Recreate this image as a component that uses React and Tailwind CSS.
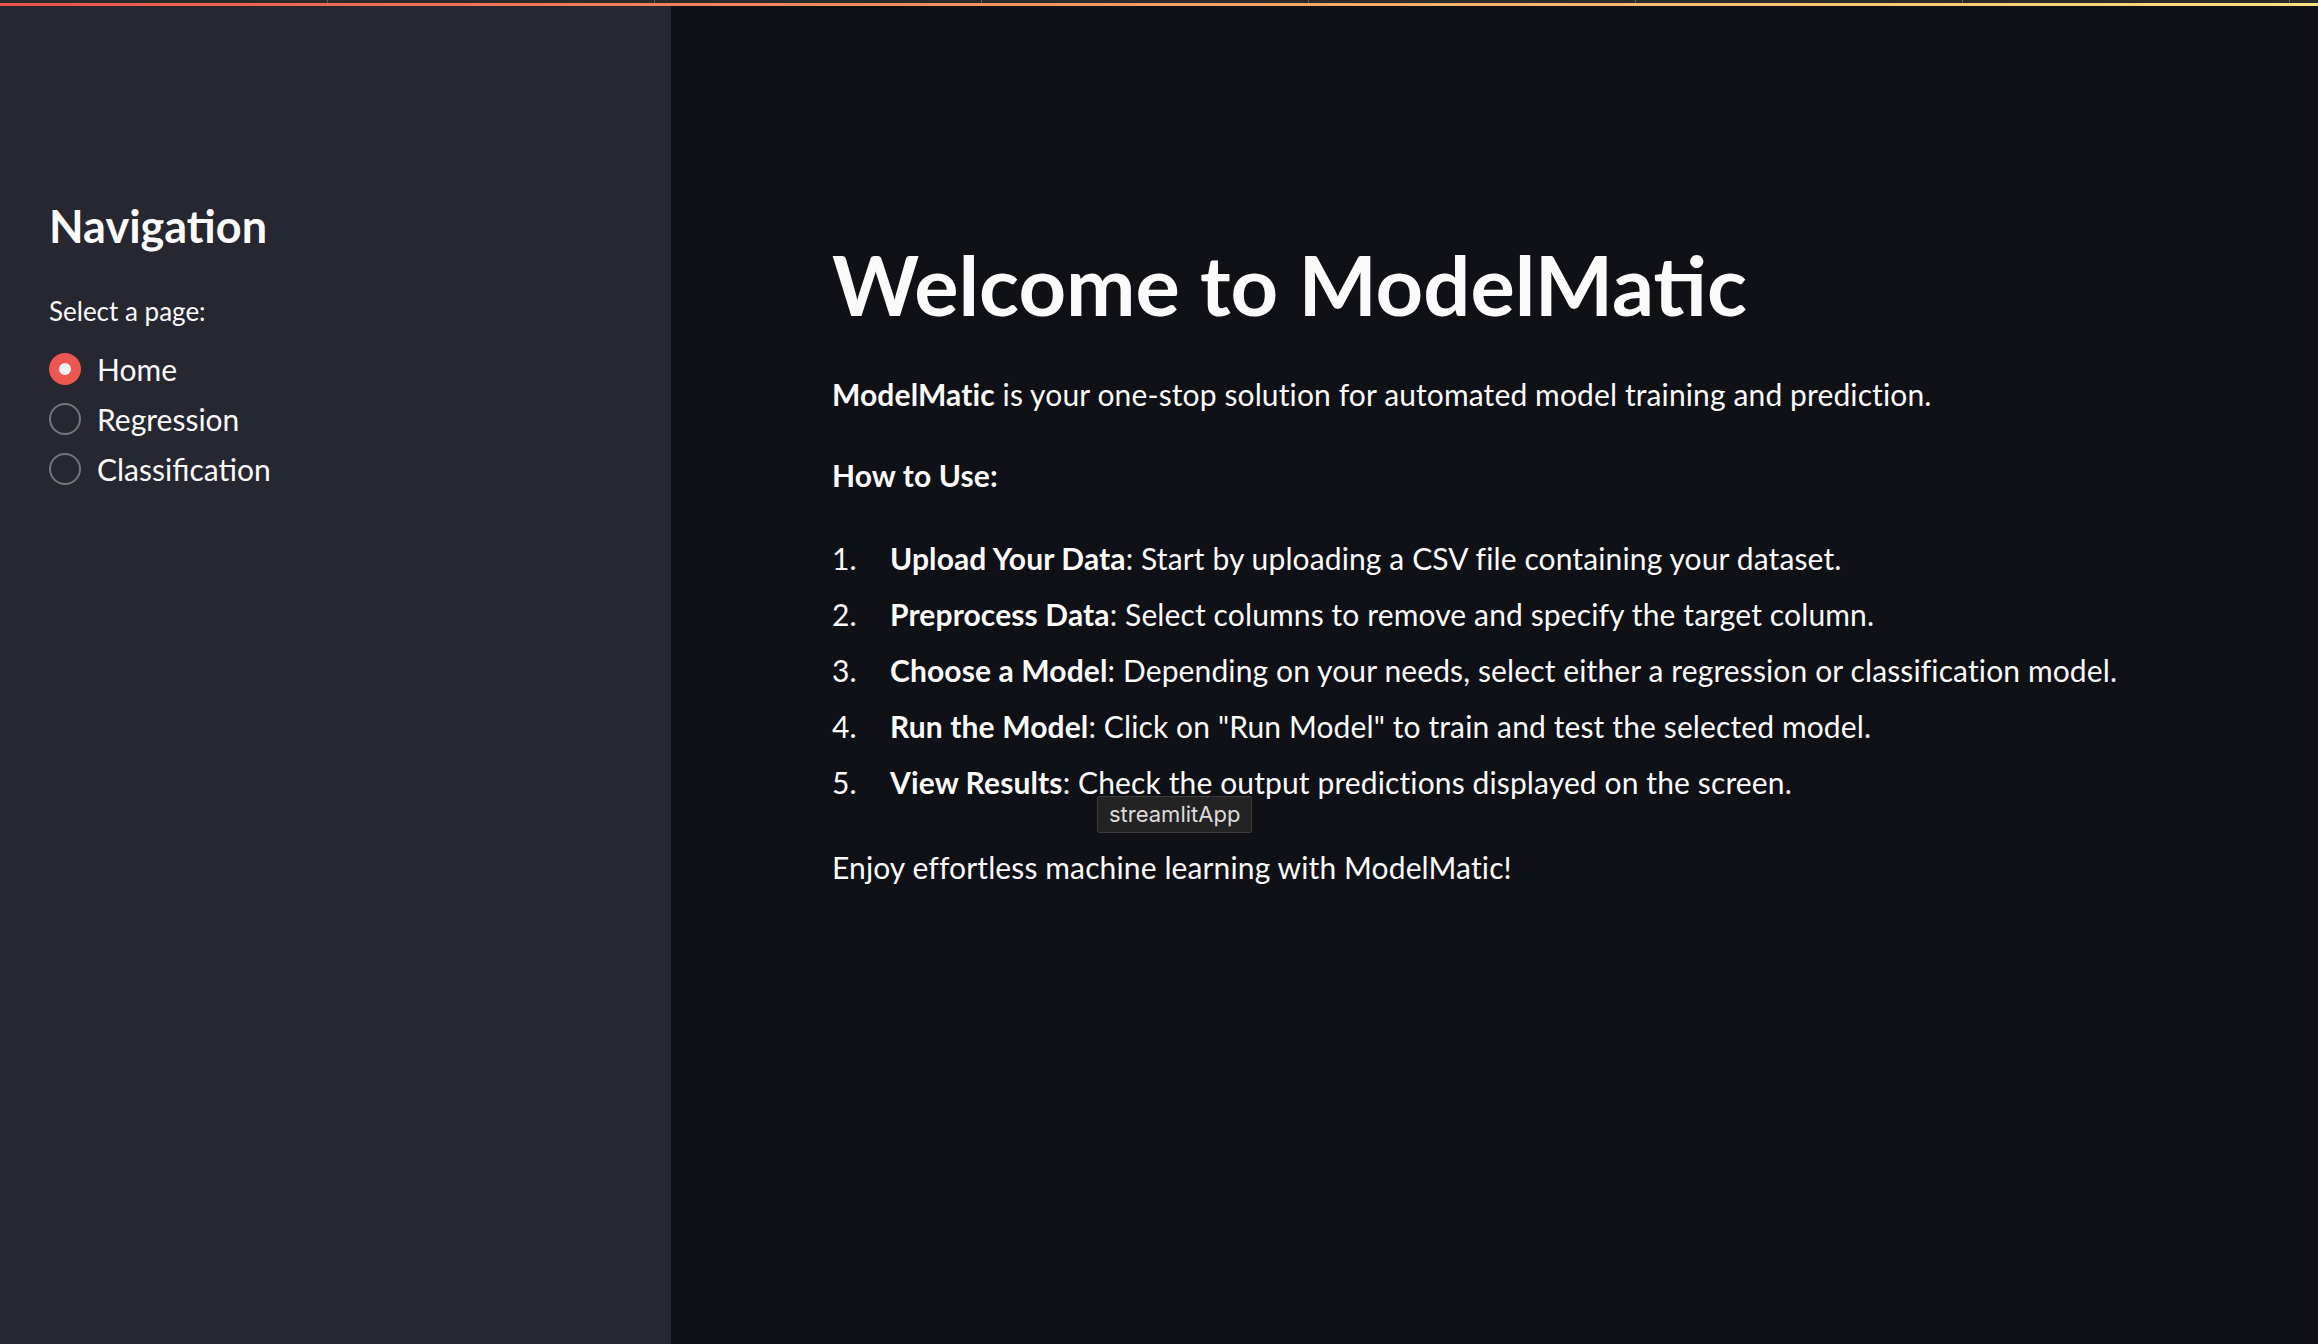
import React from "react";

const steps = [
  { title: "Upload Your Data", text: ": Start by uploading a CSV file containing your dataset." },
  { title: "Preprocess Data", text: ": Select columns to remove and specify the target column." },
  { title: "Choose a Model", text: ": Depending on your needs, select either a regression or classification model." },
  { title: "Run the Model", text: ': Click on "Run Model" to train and test the selected model.' },
  { title: "View Results", text: ": Check the output predictions displayed on the screen." },
];

const pages = ["Home", "Regression", "Classification"];

const Radio = ({ label, checked }) => (
  <div className="flex items-center h-[50px]">
    {checked ? (
      <span className="w-8 h-8 rounded-full bg-[#ec5750] flex items-center justify-center">
        <span className="w-3 h-3 rounded-full bg-[#eef0f4]" />
      </span>
    ) : (
      <span className="w-8 h-8 rounded-full border-2 border-[#75767c] bg-[#262730]" />
    )}
    <span className="ml-4 text-[30px] text-[#fafafa]">{label}</span>
  </div>
);

const App = () => {
  return (
    <div className="h-screen w-full flex flex-col bg-[#0f1116] overflow-hidden" style={{ fontFamily: "Lato, 'Noto Sans', sans-serif" }}>
      {/* top strip */}
      <div className="h-[3px] flex bg-[#2a2a2a]">
        {[0, 1, 2, 3, 4, 5, 6, 7].map((i) => (
          <div key={i} className="w-[327px] shrink-0 border-l border-[#5a5a5a] first:border-l-0" />
        ))}
      </div>
      <div className="h-[3px] bg-gradient-to-r from-[#ea524d] to-[#fbe27f]" />

      <div className="flex flex-1">
        {/* sidebar */}
        <aside className="w-[671px] shrink-0 bg-[#262730] pl-[49px] pt-[193px]">
          <h2 className="text-[45px] leading-[54px] font-bold text-[#fafafa]">Navigation</h2>
          <p className="mt-[40px] text-[26px] leading-[36px] text-[#fafafa]">Select a page:</p>
          <div className="mt-[15px]">
            {pages.map((p, i) => (
              <Radio key={p} label={p} checked={i === 0} />
            ))}
          </div>
        </aside>

        {/* main */}
        <main className="flex-1 pl-[161px] pt-[228px] text-[#fafafa] tracking-[0.12px]">
          <h1 className="text-[83px] leading-[100px] font-bold tracking-normal">Welcome to ModelMatic</h1>
          <p className="mt-[38px] text-[30px] leading-[45px]">
            <span className="font-bold">ModelMatic</span> is your one-stop solution for automated model training and prediction.
          </p>
          <p className="mt-[36px] text-[30px] leading-[45px] font-bold">How to Use:</p>
          <ol className="mt-[38px] text-[30px] leading-[45px] relative">
            {steps.map((s, i) => (
              <li key={s.title} className="flex mb-[11px]">
                <span className="w-[58px] shrink-0">{i + 1}.</span>
                <span>
                  <span className="font-bold">{s.title}</span>
                  {s.text}
                </span>
              </li>
            ))}
            <div
              className="absolute left-[265px] top-[260px] px-[11px] h-[37px] flex items-center bg-[#232323] border border-[#3c3c3c] rounded-[2px] text-[22px] text-[#dcdcdc] tracking-normal"
              style={{ fontFamily: "Inter, 'Liberation Sans', sans-serif" }}
            >
              streamlitApp
            </div>
          </ol>
          <p className="mt-[40px] text-[30px] leading-[45px]">Enjoy effortless machine learning with ModelMatic!</p>
        </main>
      </div>
    </div>
  );
};

export default App;
